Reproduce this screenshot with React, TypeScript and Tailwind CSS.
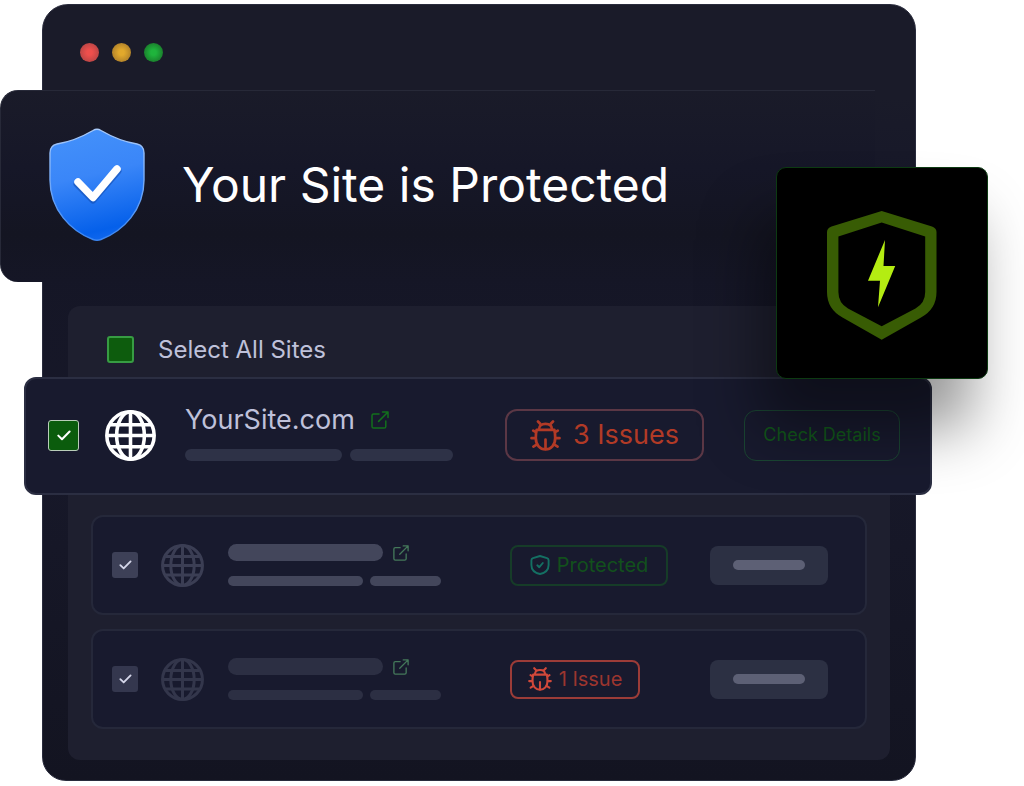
import React from "react";

function Globe({ className }: { className: string }) {
  return (
    <svg viewBox="0 0 50 50" className={className} fill="none" stroke="currentColor" strokeWidth="3.5" aria-hidden="true">
      <circle cx="25" cy="25" r="23.2" />
      <ellipse cx="25" cy="25" rx="13.6" ry="23.2" />
      <path d="M25 2v46M2 25h46M5 14.500h40M5 36h40" />
    </svg>
  );
}

function Bug({ className }: { className: string }) {
  return (
    <svg viewBox="0 0 31 31" className={className} fill="none" stroke="currentColor" strokeWidth="2.7" strokeLinecap="round" strokeLinejoin="round" aria-hidden="true">
      <path d="M8 1.500 10.200 3.800M23 1.500 20.800 3.800" />
      <path d="M9 9.400C9 5.600 11.400 3.800 15.500 3.800S22 5.600 22 9.400" />
      <path d="M6.600 9.800H24.400C25 11.800 25.200 14.400 25.200 18C25.200 25 21 29.400 15.500 29.400S5.800 25 5.800 18C5.800 14.400 6 11.800 6.600 9.800Z" />
      <path d="M15.500 19.500V29M3.200 10.600 6 12.200M27.800 10.600 25 12.200M1.500 18.200H5.600M29.500 18.200H25.400M3.400 26.600 6.600 24.600M27.600 26.600 24.400 24.600" />
    </svg>
  );
}

function ExternalLink({ className }: { className: string }) {
  return (
    <svg viewBox="0 0 18 18" className={className} fill="none" stroke="currentColor" strokeWidth="1.5" strokeLinecap="round" strokeLinejoin="round" aria-hidden="true">
      <path d="M8 3H2.600Q1 3 1 4.600V15.400Q1 17 2.600 17H13.200Q14.800 17 14.800 15.400V10" />
      <path d="M11.500 1H17V6.500M17 1 7.600 10.400" />
    </svg>
  );
}

function ShieldTick({ className }: { className: string }) {
  return (
    <svg viewBox="0 0 20 20" className={className} fill="none" stroke="currentColor" strokeWidth="1.9" strokeLinecap="round" strokeLinejoin="round" aria-hidden="true">
      <path d="M10 1 17 3.200Q18.600 3.700 18.600 5.300V10C18.600 15 15 18 10 19C5 18 1.400 15 1.400 10V5.300Q1.400 3.700 3 3.200Z" />
      <path d="M7.300 10.300 9.300 12.200 12.800 8" />
    </svg>
  );
}

function BlueShield() {
  return (
    <svg viewBox="0 0 96 114" className="h-[114px] w-24 shrink-0" aria-hidden="true">
      <defs>
        <linearGradient id="shieldFill" x1="0.4" y1="0" x2="0.6" y2="1">
          <stop offset="0" stopColor="#4390fa" />
          <stop offset="0.4" stopColor="#3a86f8" />
          <stop offset="0.9" stopColor="#0560ea" />
          <stop offset="1" stopColor="#1268ee" />
        </linearGradient>
        <linearGradient id="shieldEdge" x1="0" y1="0" x2="0" y2="1">
          <stop offset="0" stopColor="#a9cbfb" />
          <stop offset="1" stopColor="#3b86f2" />
        </linearGradient>
      </defs>
      <path
        d="M44 2.500Q48 0 52 2.500C64 9.500 76 14 88 16Q95 17.500 95 25V52C95 82 74 103 52 111.500Q48 113 44 111.500C22 103 1 82 1 52V25Q1 17.500 8 16C20 14 32 9.500 44 2.500Z"
        fill="url(#shieldFill)"
        stroke="url(#shieldEdge)"
        strokeWidth="1.4"
      />
      <path d="M28 56 44 72 69 43" fill="none" stroke="#0b3f9c" strokeOpacity="0.45" strokeWidth="7" strokeLinecap="round" strokeLinejoin="round" />
      <path d="M29 54 44 69.500 68 41" fill="none" stroke="#ffffff" strokeWidth="7.500" strokeLinecap="round" strokeLinejoin="round" />
    </svg>
  );
}

function TickBox({ label, box, tick }: { label: string; box: string; tick: string }) {
  return (
    <span className="grid shrink-0 place-items-center">
      <input type="checkbox" defaultChecked aria-label={label} className={"col-start-1 row-start-1 appearance-none " + box} />
      <svg viewBox="0 0 14 11" className={"pointer-events-none col-start-1 row-start-1 " + tick} fill="none" stroke="currentColor" strokeWidth="2" strokeLinecap="round" strokeLinejoin="round" aria-hidden="true">
        <path d="M1.300 5.600 5 9.300 12.600 1.500" />
      </svg>
    </span>
  );
}

function SiteRow({ name, bar, globe, box, children }: { name: string; bar: string; globe: string; box: string; children: React.ReactNode }) {
  return (
    <li className="mx-[23px] flex h-[100px] items-center rounded-xl border-2 border-[#25283a] bg-[#181a2e] pr-[37px] pl-[19px]">
      <TickBox label={name} box={"size-[26px] rounded-[3px] " + box} tick="h-[10px] w-[13px] text-[#d5d7ea]" />
      <Globe className={"mr-6 ml-[23px] size-[43px] shrink-0 " + globe} />
      <div className="flex flex-1 flex-col gap-[15px]">
        <div className="flex items-center gap-[10px]">
          <span className={"h-[17px] w-[155px] rounded-full " + bar} />
          <a href="#site" aria-label={"Open " + name} className="-my-1 text-[#44785a]">
            <ExternalLink className="size-4" />
          </a>
        </div>
        <div className="flex gap-[7px]">
          <span className={"h-[10px] w-[135px] rounded-full " + bar} />
          <span className={"h-[10px] w-[71px] rounded-full " + bar} />
        </div>
      </div>
      <div className="w-[200px]">{children}</div>
      <button type="button" aria-label={"Details for " + name} className="grid h-[39px] w-[118px] place-items-center rounded-lg bg-[#2c3043]">
        <span className="h-[10px] w-[72px] rounded-full bg-[#5d6075]" />
      </button>
    </li>
  );
}

export default function App() {
  return (
    <div className="min-h-screen bg-white pt-1 font-['Inter','Liberation_Sans',sans-serif]">
      <main className="relative mr-[108px] ml-[42px] rounded-t-[26px] rounded-b-[24px] border border-[#292b3c] bg-[linear-gradient(180deg,#1a1b29_0%,#1a1b29_12%,#161729_26%,#151626_34%,#171829_60%,#131421_100%)] pb-5">
        <header className="flex h-[85px] gap-[13px] pt-[38px] pl-[37px]">
          <span className="size-[19px] rounded-full bg-[radial-gradient(circle,#ee4f4c_20%,#b94545_75%)]" />
          <span className="size-[19px] rounded-full bg-[radial-gradient(circle,#e2a92c_20%,#b0812a_75%)]" />
          <span className="size-[19px] rounded-full bg-[radial-gradient(circle,#1fb43c_20%,#1a7d2c_75%)]" />
        </header>

        <section className="mr-10 -ml-[43px] flex h-48 items-center gap-[37px] rounded-l-[18px] border-t border-l border-[#272938] bg-[linear-gradient(180deg,#1a1b29_0%,#161728_40%,#141522_75%,#151626_100%)] pb-1 pl-12">
          <BlueShield />
          <h1 className="text-5xl leading-[52px] font-normal text-white">Your Site is Protected</h1>
        </section>

        <section className="mx-[25px] mt-6 rounded-xl bg-[#1e1f2f] pb-[31px]">
          <div className="flex h-[71px] items-center gap-6 pt-4 pl-[39px]">
            <input id="all-sites" type="checkbox" className="size-[27px] appearance-none rounded-[3px] border-2 border-[#379c43] bg-[#0d5c0d]" />
            <label htmlFor="all-sites" className="text-2xl leading-8 text-[#bfc1da]">
              Select All Sites
            </label>
          </div>

          <ul>
            <li className="-mr-[42px] -ml-[44px] flex h-[118px] items-center rounded-xl border-2 border-[#2b2e42] bg-[#181a2e] pr-[30px] pb-[2px] pl-[22px]">
              <TickBox label="YourSite.com" box="size-[31px] rounded-[3px] border border-[#b9cdb9] bg-[#0b5c0d]" tick="h-[11px] w-[14px] text-white" />
              <Globe className="mr-[29px] ml-[26px] size-[51px] shrink-0 text-white" />
              <div className="flex flex-1 flex-col gap-[19px]">
                <div className="flex h-5 items-center gap-4">
                  <span className="text-[27px] leading-5 text-[#bfc1da]">YourSite.com</span>
                  <a href="#yoursite" aria-label="Open YourSite.com" className="text-[#12701c]">
                    <ExternalLink className="size-[18px]" />
                  </a>
                </div>
                <div className="flex gap-2">
                  <span className="h-3 w-[157px] rounded-full bg-[#2e3247]" />
                  <span className="h-3 w-[103px] rounded-full bg-[#2e3247]" />
                </div>
              </div>
              <div className="w-[239px]">
                <span className="flex h-[52px] w-[199px] items-center justify-center gap-3 rounded-xl border-2 border-[#5b3745] text-[27px] text-[#b23a26]">
                  <Bug className="size-[31px]" />
                  3 Issues
                </span>
              </div>
              <button type="button" className="h-[51px] w-[156px] rounded-xl border border-[#1a4532] text-lg text-[#12581b]">
                Check Details
              </button>
            </li>
          </ul>

          <ul className="mt-5 flex flex-col gap-[14px]">
            <SiteRow name="Second site" bar="bg-[#43465b]" globe="text-[#3b3e54]" box="bg-[#3d4057]">
              <span className="flex h-[41px] w-[158px] items-center justify-center gap-[7px] rounded-lg border-2 border-[#163c28] text-xl text-[#12501c]">
                <ShieldTick className="size-5 text-[#147063]" />
                Protected
              </span>
            </SiteRow>
            <SiteRow name="Third site" bar="bg-[#2c2f43]" globe="text-[#33364b]" box="bg-[#34374e]">
              <span className="flex h-[39px] w-[130px] items-center justify-center gap-[7px] rounded-lg border-2 border-[#9c3c38] text-xl text-[#9c352e]">
                <Bug className="size-6 text-[#d1483a]" />
                1 Issue
              </span>
            </SiteRow>
          </ul>
        </section>

        <aside className="absolute top-[162px] -right-[73px] grid size-[212px] place-items-center rounded-[10px] border border-[#0d3a12] bg-black pt-1 shadow-[-17px_50px_60px_rgba(0,0,0,0.42)]">
          <svg viewBox="0 0 110 129" className="h-[129px] w-[110px]" aria-hidden="true">
            <path
              fill="#385c04"
              fillRule="evenodd"
              d="M54.700 0 105 15.500Q109.500 17 109.500 21V81Q109.500 98 94 106.500L54.700 128.800 15.500 106.500Q0 98 0 81V21Q0 17 4.500 15.500ZM54.700 11.500 11.400 25.500V81Q11.400 92 21 97.500L54.700 115.300 88.500 97.500Q98.200 92 98.200 81V25.500Z"
            />
            <path fill="#b4ec12" d="M58 29 56.500 55H68.200L51 96.200 53 69.700H41Z" />
          </svg>
        </aside>
      </main>
    </div>
  );
}
